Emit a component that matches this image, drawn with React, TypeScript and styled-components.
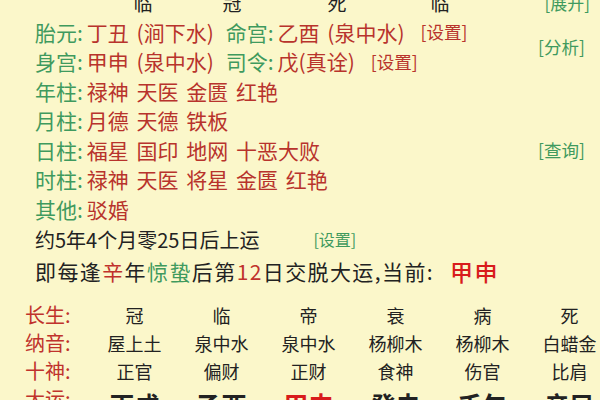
import { Fragment } from 'react';
import styled, { createGlobalStyle } from 'styled-components';

const GlobalStyle = createGlobalStyle`
  html, body {
    margin: 0;
    padding: 0;
    background: #fbf7ca;
  }
  body {
    font-family: "Noto Sans CJK SC", "Noto Sans", sans-serif;
  }
`;

const Page = styled.div`
  width: 600px;
  height: 400px;
  overflow: hidden;
  background: #fbf7ca;
  color: #222;
`;

const TopRow = styled.div`
  display: grid;
  grid-template-columns: 103px 80px 98px 112px 94px 1fr;
  height: 17px;
  font-size: 19px;
  line-height: 24px;
  overflow: hidden;
  white-space: nowrap;
  & > span {
    text-align: center;
    margin-top: -9px;
  }
`;

const TopAction = styled.span`
  color: #3f9a5e;
  font-size: 17px;
  text-align: right !important;
  padding-right: 10px;
`;

const Block = styled.div`
  padding-left: 35px;
  display: flex;
  flex-direction: column;
`;

const Row = styled.div`
  display: flex;
  align-items: center;
  height: 29.5px;
  font-size: 21px;
  white-space: nowrap;
`;

const Split = styled.div`
  display: flex;
  align-items: center;
`;

const Rows = styled.div`
  flex: 1;
  display: flex;
  flex-direction: column;
`;

const Label = styled.span<{ $gap?: boolean }>`
  color: #3f9a5e;
  margin-right: 4px;
  margin-left: ${({ $gap }) => ($gap ? '12px' : '0')};
`;

const Value = styled.span`
  color: #b8332c;
  word-spacing: 3px;
`;

const Setting = styled.span`
  color: #b8332c;
  font-size: 17.5px;
  margin-left: 16px;
`;

const Side = styled.span`
  color: #3f9a5e;
  font-size: 17.5px;
  width: 62px;
  flex: none;
`;

const Plain = styled.div<{ $wide?: boolean }>`
  display: flex;
  align-items: center;
  height: ${({ $wide }) => ($wide ? '32px' : '31px')};
  font-size: ${({ $wide }) => ($wide ? '21px' : '20px')};
  letter-spacing: ${({ $wide }) => ($wide ? '1.4px' : '0')};
  color: #222;
  white-space: nowrap;
`;

const Small = styled.span`
  color: #3f9a5e;
  font-size: 16px;
  margin-left: 54px;
`;

const Hi = styled.span<{ $c: string }>`
  color: ${({ $c }) => $c};
`;

const Current = styled.span`
  color: #d81c1c;
  font-size: 23px;
  font-weight: 500;
  margin-left: 16px;
`;

const Table = styled.div`
  margin-top: 14px;
  display: grid;
  grid-template-columns: 66px repeat(6, 87px);
  grid-auto-rows: 28px;
  padding-left: 25px;
  white-space: nowrap;
`;

const TLabel = styled.div`
  color: #c0322c;
  font-size: 20px;
  line-height: 28px;
`;

const Cell = styled.div<{ $big?: boolean; $red?: boolean }>`
  text-align: center;
  line-height: ${({ $big }) => ($big ? '38px' : '28px')};
  font-size: ${({ $big }) => ($big ? '25px' : '18px')};
  font-weight: ${({ $big }) => ($big ? 700 : 400)};
  color: ${({ $red }) => ($red ? '#d81c1c' : '#222')};
`;

const tableRows: { label: string; cells: string[]; big?: boolean }[] = [
  { label: '长生:', cells: ['冠', '临', '帝', '衰', '病', '死'] },
  { label: '纳音:', cells: ['屋上土', '泉中水', '泉中水', '杨柳木', '杨柳木', '白蜡金'] },
  { label: '十神:', cells: ['正官', '偏财', '正财', '食神', '伤官', '比肩'] },
  { label: '大运:', cells: ['丙戌', '乙酉', '甲申', '癸未', '壬午', '辛巳'], big: true },
];

export default function App() {
  return (
    <Page>
      <GlobalStyle />
      <TopRow>
        <span />
        <span>临</span>
        <span>冠</span>
        <span>死</span>
        <span>临</span>
        <TopAction>[展开]</TopAction>
      </TopRow>
      <Block>
        <Split>
          <Rows>
            <Row>
              <Label>胎元:</Label>
              <Value>丁丑 (涧下水)</Value>
              <Label $gap>命宫:</Label>
              <Value>乙酉 (泉中水)</Value>
              <Setting>[设置]</Setting>
            </Row>
            <Row>
              <Label>身宫:</Label>
              <Value>甲申 (泉中水)</Value>
              <Label $gap>司令:</Label>
              <Value>戊(真诠)</Value>
              <Setting>[设置]</Setting>
            </Row>
          </Rows>
          <Side>[分析]</Side>
        </Split>
        <Row>
          <Label>年柱:</Label>
          <Value>禄神 天医 金匮 红艳</Value>
        </Row>
        <Row>
          <Label>月柱:</Label>
          <Value>月德 天德 铁板</Value>
        </Row>
        <Split>
          <Rows>
            <Row>
              <Label>日柱:</Label>
              <Value>福星 国印 地网 十恶大败</Value>
            </Row>
          </Rows>
          <Side>[查询]</Side>
        </Split>
        <Row>
          <Label>时柱:</Label>
          <Value>禄神 天医 将星 金匮 红艳</Value>
        </Row>
        <Row>
          <Label>其他:</Label>
          <Value>驳婚</Value>
        </Row>
        <Plain>
          约5年4个月零25日后上运
          <Small>[设置]</Small>
        </Plain>
        <Plain $wide>
          即每逢<Hi $c="#c0322c">辛</Hi>年<Hi $c="#3f9a5e">惊蛰</Hi>后第<Hi $c="#c0322c">12</Hi>日交脱大运,当前:
          <Current>甲申</Current>
        </Plain>
      </Block>
      <Table>
        {tableRows.map((r) => (
          <Fragment key={r.label}>
            <TLabel>{r.label}</TLabel>
            {r.cells.map((c, i) => (
              <Cell key={r.label + i} $big={r.big} $red={r.big && c === '甲申'}>
                {c}
              </Cell>
            ))}
          </Fragment>
        ))}
      </Table>
    </Page>
  );
}
